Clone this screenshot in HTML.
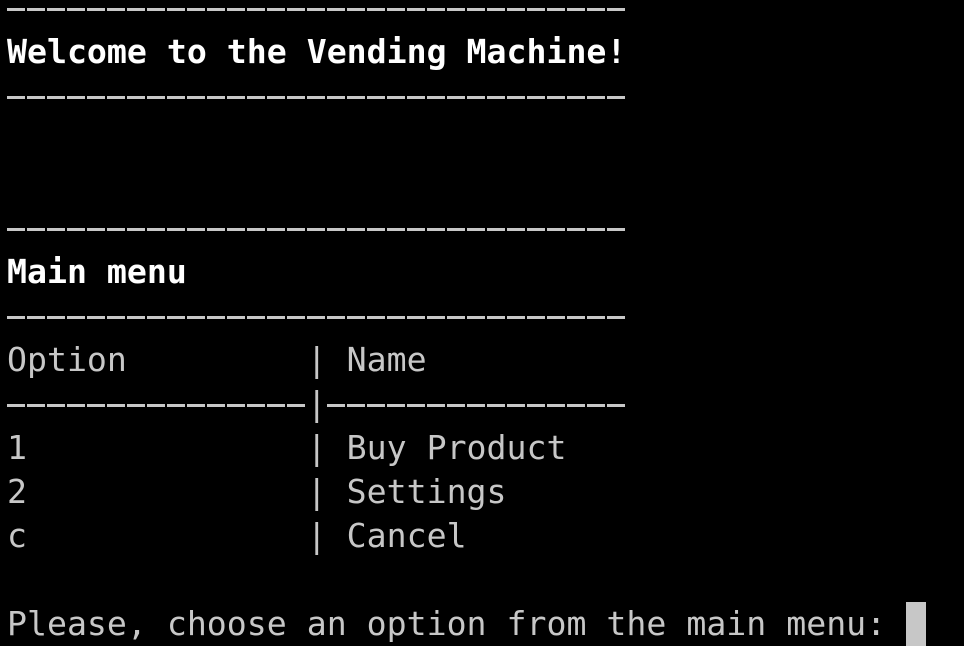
<!DOCTYPE html>
<html><head><meta charset="utf-8"><style>
html,body{margin:0;padding:0;background:#000;width:964px;height:646px;overflow:hidden}
pre{position:absolute;left:7px;top:-14px;margin:0;font-family:"DejaVu Sans Mono","Liberation Mono",monospace;font-size:33.2px;line-height:44px;color:#c7c7c7;white-space:pre}
b{color:#fff;font-weight:bold}
.cur{display:inline-block;width:20px;height:44px;background:#c7c7c7;vertical-align:top}
.d{display:inline-block;height:44px;vertical-align:top;color:transparent;background:repeating-linear-gradient(90deg,#c7c7c7 0 18px,transparent 18px 20px) no-repeat;background-size:100% 3px;background-position:0 22px}
</style></head><body>
<pre><span class="d">-------------------------------</span>
<b>Welcome to the Vending Machine!</b>
<span class="d">-------------------------------</span>


<span class="d">-------------------------------</span>
<b>Main menu</b>
<span class="d">-------------------------------</span>
Option         | Name
<span class="d">---------------</span>|<span class="d">---------------</span>
1              | Buy Product
2              | Settings
c              | Cancel

Please, choose an option from the main menu: <span class="cur"></span></pre>
</body></html>
